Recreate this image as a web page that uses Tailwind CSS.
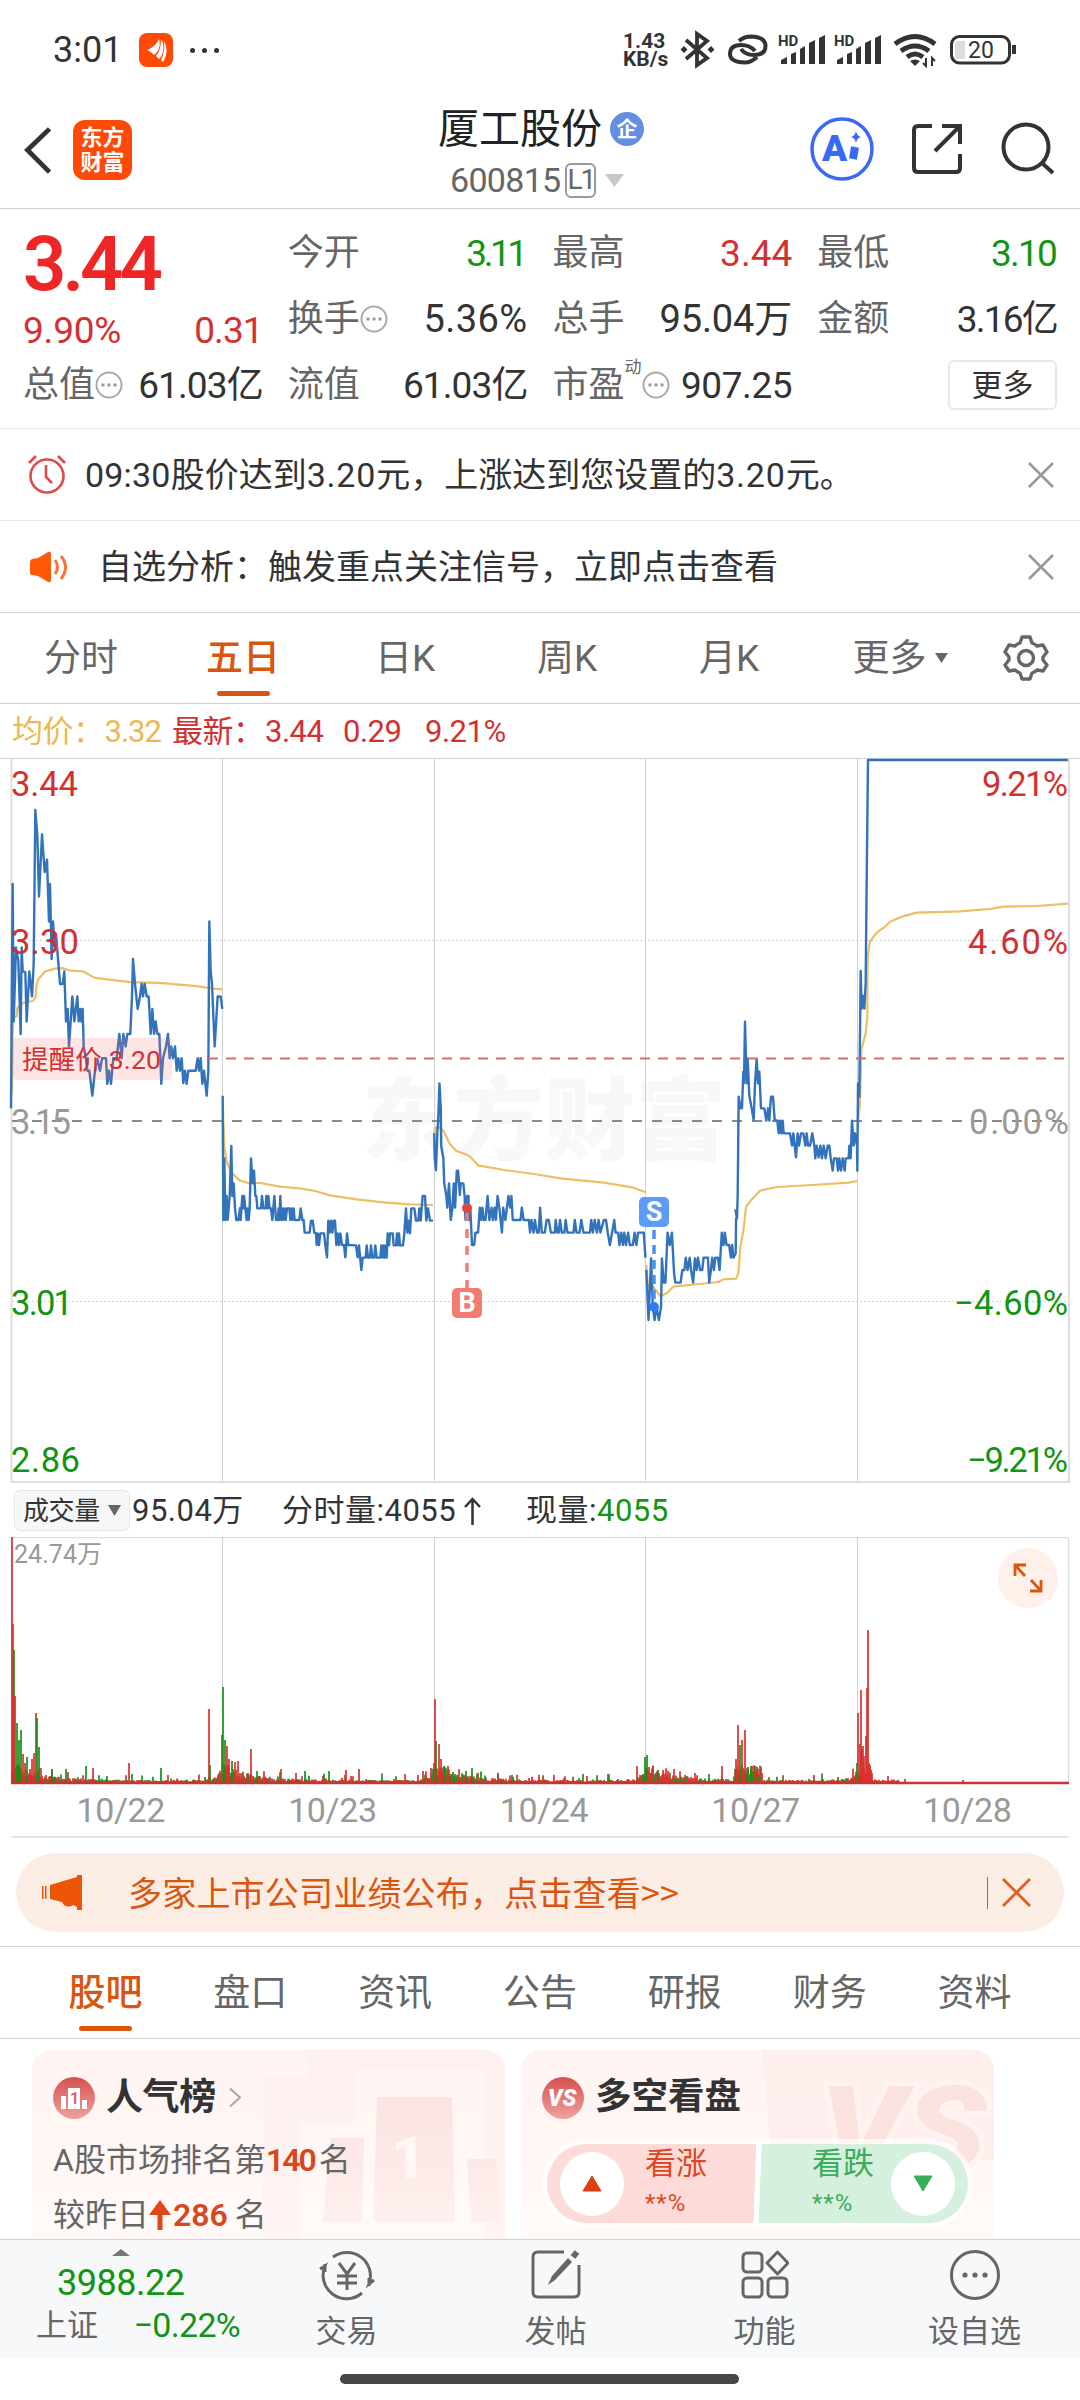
<!DOCTYPE html>
<html lang="zh-CN">
<head>
    <meta charset="UTF-8">
    <meta name="viewport" content="width=device-width, initial-scale=1.0">
    <title>厦工股份 600815</title>
    <script src="https://cdn.jsdelivr.net/npm/@tailwindcss/browser@4"></script>
</head>
<body class="w-[1080px] h-[2400px] overflow-hidden bg-white flex flex-col font-['Roboto','Noto_Sans_CJK_SC',sans-serif] leading-none text-[#333] whitespace-nowrap">

    <!-- status bar -->
    <div class="h-[100px] shrink-0 flex items-center pl-[53px] pr-[58px]">
        <span class="text-[36px] w-[86px]">3:01</span>
        <svg class="w-[34px] h-[34px]" viewBox="0 0 34 34">
            <rect width="34" height="34" rx="8" fill="#ff4a05"/>
            <path d="M8 17C13 15 18 11 20 6C22 12 20 18 15 22C13 20 11 18 8 17ZM17 23C21 18 22 12 22 6C26 12 25 21 20 26ZM22 27C25 21 26 14 25 8C29 15 28 23 24 29Z" fill="#fff"/>
        </svg>
        <div class="flex gap-[7px] ml-[17px]">
            <i class="w-[5px] h-[5px] rounded-full bg-[#333]"></i>
            <i class="w-[5px] h-[5px] rounded-full bg-[#333]"></i>
            <i class="w-[5px] h-[5px] rounded-full bg-[#333]"></i>
        </div>
        <div class="ml-auto flex items-center">
            <div class="w-[53px] text-[21px] leading-[18px] font-bold">1.43<br>KB/s</div>
            <svg class="w-[346px] h-[40px]" viewBox="676 30 346 40" fill="none" stroke="#333" stroke-width="3">
                <path d="M686 40L707 58L697 65V34L707 41L686 59" stroke-width="3.800"/>
                <g fill="#333" stroke="none"><path d="M680.500 49.500l3.500-3.500l3.500 3.500l-3.500 3.500zM707.500 49.500l3.500-3.500l3.500 3.500l-3.500 3.500z"/></g>
                <path d="M739 41Q744 36.500 751 36.500Q765.500 37 765.500 46Q765.500 55 754 55Q745 55 741 49M757 57Q751 62.500 745 62.500Q730 62 730 54Q730 45 741 45Q750 45 755 51" stroke-width="4"/>
                <g fill="#333" stroke="none">
                    <text x="778" y="46" font-size="15" font-weight="700">HD</text>
                    <path d="M781 60l6-3v7h-6zM791 54l5-2v12h-5zM800 49l5-3v18h-5zM809 43l6-3v24h-6zM819 38l6-3v29h-6z"/>
                    <text x="834" y="46" font-size="15" font-weight="700">HD</text>
                    <path d="M837 60l6-3v7h-6zM847 54l5-2v12h-5zM856 49l5-3v18h-5zM865 43l6-3v24h-6zM875 38l6-3v29h-6z"/>
                </g>
                <path d="M895 44Q915 29 935 44M901 51Q915 41 929 51M907 57Q915 51 923 57" stroke-width="5"/>
                <path d="M910 61Q915 58 920 61L915 66Z" fill="#333" stroke="none"/>
                <path d="M926 58V66L923 63M932 66V58L935 61" stroke-width="2"/>
                <rect x="951.500" y="36.500" width="58" height="26.500" rx="8"/>
                <path d="M957 41H965V59H957Q955 59 955 56V44Q955 41 957 41Z" fill="#ddd" stroke="none"/>
                <path d="M1014 45V54" stroke-width="4"/>
                <text x="981" y="58" font-size="23" text-anchor="middle" fill="#333" stroke="none">20</text>
            </svg>
        </div>
    </div>

    <!-- header -->
    <header class="h-[109px] shrink-0 border-b border-[#cfcfcf] relative flex items-start justify-between pt-5 px-6">
        <div class="flex items-center">
            <svg class="w-[28px] h-[48px]" viewBox="0 0 28 50" fill="none" stroke="#333" stroke-width="5"><path d="M26 3L3 25L26 48"/></svg>
            <div class="ml-[21px] w-[59px] h-[60px] rounded-xl bg-[#ff4a05] text-white text-[22px] leading-[25px] font-bold flex items-center justify-center">东方<br>财富</div>
        </div>
        <div class="absolute left-0 right-0 top-[6px] pointer-events-none">
            <div class="flex items-center pl-[438px] h-[46px] text-[41px] text-[#222]">厦工股份
                <span class="ml-[8px] w-[34px] h-[34px] rounded-full bg-[#658de2] text-white text-[21px] font-bold flex items-center justify-center">企</span>
            </div>
            <div class="flex items-center pl-[450px] h-[56px] text-[34px] tracking-[-0.7px] text-[#666]">600815
                <span class="ml-[5px] w-[31px] h-[35px] rounded-md border-2 border-[#999] text-[28px] tracking-[-2px] flex items-center justify-center">L1</span>
                <svg class="ml-[9px] w-[19px] h-[13px]" viewBox="0 0 19 13"><path d="M0 0H19L9.500 13Z" fill="#c8c8c8"/></svg>
            </div>
        </div>
        <svg class="w-[252px] h-[66px] -mr-1 -mt-[4px]" viewBox="808 116 252 66" fill="none" stroke="#333" stroke-width="4">
            <circle cx="842" cy="149" r="30" stroke="#3a6af5" stroke-width="3.500"/>
            <text x="822" y="161" font-size="37" font-weight="900" fill="#3a6af5" stroke="none">A</text>
            <path d="M855 147L853 159" stroke="#3a6af5" stroke-width="8"/>
            <path d="M856 131Q857 136 861 137Q857 138 856 143Q855 138 851 137Q855 136 856 131Z" fill="#3a6af5" stroke="none"/>
            <path d="M932 126H918Q914 126 914 130V168Q914 172 918 172H956Q960 172 960 168V154M935 151L960 126M942 126H960V144"/>
            <circle cx="1026" cy="147" r="22.500"/><path d="M1042 163L1053 173"/>
        </svg>
    </header>

    <!-- quote -->
    <section class="h-[219px] shrink-0 pt-[11px] px-[23px] grid grid-cols-4 gap-x-[25px] grid-rows-[66px_66px_66px] items-center text-[37px] tracking-[-0.9px] text-[#333]">
        <div class="row-span-2 h-[132px] flex flex-col">
            <div class="h-[88px] flex items-center text-[76px] tracking-[-4px] font-semibold text-[#f02525]">3.44</div>
            <div class="h-[44px] flex items-center justify-between text-[#d33131]"><span class="tracking-[-0.2px]">9.90%</span><span>0.31</span></div>
        </div>
        <div class="flex items-center justify-between"><span class="text-[36px] tracking-normal text-[#666]">今开</span><span class="tracking-[-3.5px] pr-[3px] text-[#139413]">3.11</span></div>
        <div class="flex items-center justify-between"><span class="text-[36px] tracking-normal text-[#666]">最高</span><span class="tracking-normal text-[#d33131]">3.44</span></div>
        <div class="flex items-center justify-between"><span class="text-[36px] tracking-normal text-[#666]">最低</span><span class="tracking-[-1.800px] pr-[1px] text-[#139413]">3.10</span></div>
        <div class="flex items-center justify-between">
            <span class="flex items-center text-[36px] tracking-normal text-[#666]">换手<svg class="w-[28px] h-[28px]" viewBox="0 0 28 28"><circle cx="14" cy="14" r="12.500" fill="none" stroke="#aaa" stroke-width="2"/><path d="M6.500 12.500h3v3h-3zM12.500 12.500h3v3h-3zM18.500 12.500h3v3h-3z" fill="#999"/></svg></span>
            <span class="text-[38px] tracking-[0.4px]">5.36%</span>
        </div>
        <div class="flex items-center justify-between"><span class="text-[36px] tracking-normal text-[#666]">总手</span><span class="text-[38px] tracking-[-0.1px]">95.04万</span></div>
        <div class="flex items-center justify-between"><span class="text-[36px] tracking-normal text-[#666]">金额</span><span class="tracking-[-1.800px]">3.16亿</span></div>
        <div class="flex items-center justify-between">
            <span class="flex items-center text-[36px] tracking-normal text-[#666]">总值<svg class="w-[28px] h-[28px]" viewBox="0 0 28 28"><circle cx="14" cy="14" r="12.500" fill="none" stroke="#aaa" stroke-width="2"/><path d="M6.500 12.500h3v3h-3zM12.500 12.500h3v3h-3zM18.500 12.500h3v3h-3z" fill="#999"/></svg></span>
            <span>61.03亿</span>
        </div>
        <div class="flex items-center justify-between"><span class="text-[36px] tracking-normal text-[#666]">流值</span><span>61.03亿</span></div>
        <div class="flex items-center justify-between">
            <span class="flex items-center text-[36px] tracking-normal text-[#666]">市盈<span class="text-[17px] self-start -mt-2">动</span><svg class="w-[28px] h-[28px]" viewBox="0 0 28 28"><circle cx="14" cy="14" r="12.500" fill="none" stroke="#aaa" stroke-width="2"/><path d="M6.500 12.500h3v3h-3zM12.500 12.500h3v3h-3zM18.500 12.500h3v3h-3z" fill="#999"/></svg></span>
            <span class="tracking-[-0.4px]">907.25</span>
        </div>
        <div class="justify-self-end w-[109px] h-[50px] rounded-md border-2 border-[#e8e8e8] text-[31px] tracking-normal flex items-center justify-center">更多</div>
    </section>

    <!-- alerts -->
    <div class="h-[92px] shrink-0 border-t border-[#e8e8e8] flex items-center pl-[27px] pr-[26px]">
        <svg class="w-[40px] h-[42px] -mt-[2px]" viewBox="0 0 40 42" fill="none" stroke="#e04848" stroke-width="2.600"><circle cx="20" cy="23" r="16.500"/><path d="M19 12V24L25 30M2 10L9 3M38 10L31 3"/></svg>
        <span class="ml-[18px] text-[34px]"><span class="tracking-[0.2px]">09:30</span>股价达到<span class="tracking-[0.8px]">3.20</span>元，上涨达到您设置的<span class="tracking-[0.8px]">3.20</span>元。</span>
        <svg class="ml-auto w-[26px] h-[26px]" viewBox="0 0 26 26" stroke="#999" stroke-width="2.600"><path d="M1 1L25 25M25 1L1 25"/></svg>
    </div>
    <div class="h-[92px] shrink-0 border-t border-[#e8e8e8] flex items-center pl-[29px] pr-[26px]">
        <svg class="w-[40px] h-[32px]" viewBox="0 0 40 32"><path d="M1 11Q1 9 3 8L9 7L19 1Q22 0 22 3V29Q22 32 19 31L9 25L3 24Q1 24 1 22Z" fill="#ff5a0a"/><path d="M26 9Q31 16 26 23M32 5Q41 16 32 28" fill="none" stroke="#f5743a" stroke-width="3"/></svg>
        <span class="ml-[29px] text-[34px]">自选分析：触发重点关注信号，立即点击查看</span>
        <svg class="ml-auto w-[26px] h-[26px]" viewBox="0 0 26 26" stroke="#999" stroke-width="2.600"><path d="M1 1L25 25M25 1L1 25"/></svg>
    </div>

    <!-- period tabs -->
    <nav class="h-[91px] shrink-0 border-t border-[#cfcfcf] flex text-[37px] text-[#666]">
        <div class="w-[162px] flex items-center justify-center">分时</div>
        <div class="w-[162px] flex items-center justify-center relative text-[#d9560f] font-medium">五日<i class="absolute bottom-[7px] w-[53px] h-[5px] rounded-full bg-[#d9560f]"></i></div>
        <div class="w-[162px] flex items-center justify-center">日K</div>
        <div class="w-[162px] flex items-center justify-center">周K</div>
        <div class="w-[162px] flex items-center justify-center">月K</div>
        <div class="w-[162px] flex items-center justify-center pl-[18px]">更多<svg class="ml-[8px] w-[13px] h-[10px]" viewBox="0 0 13 10"><path d="M0 0H13L6.500 10Z" fill="#666"/></svg></div>
        <div class="w-[108px] flex items-center justify-center">
            <svg class="w-[46px] h-[46px]" viewBox="0 0 46 46" fill="none" stroke="#666" stroke-width="3.400" stroke-linejoin="round"><path d="M19 2H27L29 8Q32 9 34 11L40 10L44 17L40 22V25L44 30L40 36L34 35Q32 37 29 38L27 44H19L17 38Q14 37 12 35L6 36L2 30L6 25V22L2 17L6 10L12 11Q14 9 17 8Z"/><circle cx="23" cy="23" r="7.500"/></svg>
        </div>
    </nav>

    <!-- legend -->
    <div class="h-[55px] shrink-0 border-t border-[#cfcfcf] flex items-center pl-3 text-[31px] tracking-[-0.5px] text-[#d33131]">
        <span class="text-[#edb84e] w-[160px]">均价：<span class="ml-[1px] tracking-[-1px]">3.32</span></span>
        <span class="w-[93px]">最新：</span>
        <span class="w-[78px]">3.44</span>
        <span class="w-[82px]">0.29</span>
        <span>9.21%</span>
    </div>

    <!-- five day price chart -->
    <svg class="w-[1080px] h-[726px] shrink-0" viewBox="0 758 1080 726" fill="none">
        <text x="362" y="1153" font-size="91" font-weight="900" fill="#f8f8f8">东方财富</text>
        <path d="M0 758.500H1080M222.500 758V1482M434.500 758V1482M645.500 758V1482M857.500 758V1482" stroke="#d0d0d0"/>
        <path d="M11.500 758V1482H1069V758" stroke="#dedede" stroke-width="2"/>
        <path d="M12 940.500H1068M12 1301.500H1068" stroke="#d5d5d5" stroke-dasharray="2 2"/>
        <path d="M12 1121H1068" stroke="#8a8a8a" stroke-width="2" stroke-dasharray="10 10"/>
        <g stroke="#ecbf62" stroke-width="2.200" stroke-linejoin="round">
            <g transform="translate(0 750) scale(.33333 .35714)"><path vector-effect="non-scaling-stroke" d="M36 960L38 800L41 750L50 745L52 722L70 708L100 702L107 690L109 660L115 642L135 620L165 612L190 611L210 618L250 620L285 638L390 650L475 652L530 656L590 661L640 668L667 670"/></g>
            <g transform="translate(200 1120) scale(.33333)"><path vector-effect="non-scaling-stroke" d="M69 -40L70 0L73 80L80 125L92 155L105 168L120 182L145 189L180 189L240 200L305 206L345 213L390 226L470 238L550 247L630 253L699 255"/></g>
            <g transform="translate(400 1040) scale(.43367 .33333)">
                <path vector-effect="non-scaling-stroke" d="M80 262V282L83 262L90 262L100 272L115 312L130 333L145 340L160 348L180 376L240 390L310 402L370 415L470 428L535 442L567 457"/>
                <path vector-effect="non-scaling-stroke" d="M568 675L572 740L585 742L600 768L615 760L630 740L690 732L735 726L745 718L775 716L780 700L785 620L792 570L798 500L810 480L830 452L870 441L950 435L1035 428L1054 423"/>
            </g>
            <g transform="translate(700 750) scale(.33333)"><path vector-effect="non-scaling-stroke" d="M474 1110L480 1060L484 900L497 850L502 800L503 620L510 575L530 548L555 530L570 515L605 500L650 488L780 484L870 477L910 470L1010 468L1104 461"/></g>
        </g>
        <g stroke="#3273bb" stroke-width="2.400" stroke-linejoin="round">
            <g transform="translate(0 750) scale(.33333 .35714)"><path vector-effect="non-scaling-stroke" d="M33 1003L38 375L41 760L48 553L55 590L62 795L65 553L68 620L76 622L80 760L88 620L92 655L96 690L101 600L106 168L112 240L117 410L126 236L134 342L141 307L147 480L150 375L155 585L159 480L164 550L168 515L180 655L188 655L193 620L198 760L203 725L207 830L217 690L223 760L232 690L236 760L241 725L244 760L248 725L251 830L258 865L262 898L268 898L277 968L285 898L292 865L300 898L306 863L318 863L322 935L327 898L333 935L340 863L350 863L358 795L365 863L370 795L377 830L382 795L391 795L396 690L399 585L405 655L413 725L420 690L425 655L429 690L434 655L440 690L446 690L452 795L457 725L462 795L467 760L472 795L478 795L484 935L489 863L498 830L504 795L509 863L514 830L519 863L525 830L530 898L535 863L540 898L545 863L550 933L555 898L560 935L565 898L587 898L593 863L597 898L602 863L607 935L612 898L620 968L625 900L628 480L632 620L636 655L644 830L653 690L662 690L667 725"/></g>
            <g transform="translate(200 1120) scale(.33333)"><path vector-effect="non-scaling-stroke" d="M68 -73L70 300L73 115L76 300L80 228L83 300L86 265L89 228L94 78L97 228L101 190L105 265L109 300L115 300L120 265L122 300L127 228L130 265L132 228L136 265L140 300L143 265L146 300L149 265L153 115L158 190L162 152L166 228L169 228L172 265L183 265L186 228L190 265L197 265L199 228L202 265L205 228L209 265L213 265L217 300L223 228L228 300L233 300L236 265L238 300L241 228L244 300L247 265L250 300L254 265L257 300L261 265L268 265L271 300L274 265L277 300L281 265L284 300L298 300L302 265L307 300L311 300L314 338L329 338L333 302L338 302L343 338L348 340L350 375L353 340L357 375L361 340L372 340L376 375L381 412L385 302L389 338L393 302L397 338L401 302L405 302L409 375L413 340L417 375L421 340L426 375L432 375L436 412L441 340L445 375L468 376L473 412L477 376L484 450L488 413L497 413L500 376L504 413L510 413L513 376L517 413L523 413L526 376L530 413L541 413L544 376L548 413L551 376L554 413L557 376L560 413L563 340L567 376L570 340L578 340L581 376L588 376L591 340L594 376L597 340L600 376L609 376L613 340L618 265L622 338L626 302L630 340L634 265L643 265L648 302L655 302L658 265L662 302L668 228L675 228L679 302L684 265L690 302L699 302"/></g>
            <g transform="translate(400 1040) scale(.43367 .33333)">
                <path vector-effect="non-scaling-stroke" d="M79 280L80 355L83 391L86 280L88 242L91 130L94 205L95 318L100 355L102 430L107 468L109 503L113 430L117 540L121 503L124 430L127 503L131 392L134 392L138 465L140 430L146 430L149 468L151 540L153 503L155 468L158 468L158 540L162 503L166 615L171 615L174 578L180 578L184 503L187 540L190 503L193 540L197 540L202 468L206 540L211 503L214 540L218 503L221 540L225 468L229 503L235 578L238 503L243 540L250 468L254 503L257 468L260 540L278 540L281 503L285 540L297 540L300 578L303 540L308 578L311 540L316 578L320 578L323 503L327 578L334 578L338 540L343 540L348 578L357 578L359 540L363 578L366 578L369 540L373 578L379 578L382 540L386 578L400 578L403 540L407 578L414 578L418 540L423 578L438 578L441 540L445 578L449 540L454 578L458 540L462 578L470 540L475 540L479 578L484 615L489 578L494 540L497 578L503 578L506 615L510 578L514 615L517 578L521 615L526 578L530 615L537 615L541 578L545 615L549 578L562 578L566 653"/>
                <path vector-effect="non-scaling-stroke" d="M568 690L573 840L579 655L583 800L587 840L591 800L597 840L602 800L604 655L608 728L612 728L617 578L622 615L627 578L632 700L635 728L647 728L651 690L656 690L659 653L663 690L668 653L671 690L676 728L680 655L684 690L687 653L692 690L697 690L700 653L710 653L713 728L717 690L720 653L724 690L727 653L733 653L737 690L742 578L746 615L749 578L753 615L759 615L763 653L766 615L769 653L774 640L775 535L778 535"/>
            </g>
            <g transform="translate(700 750) scale(.33333)">
                <path vector-effect="non-scaling-stroke" d="M106 1378L111 1405L113 1340L116 1040L122 1075L126 1075L130 965L132 1000L135 815L140 1000L143 925L148 1038L155 1075L161 1110L165 1000L170 928L174 1000L178 965L183 1075L193 1075L199 1112L204 1075L208 1112L213 1040L219 1040L224 1110L232 1112L236 1150L240 1112L244 1150L248 1112L251 1150L270 1150L276 1187L280 1150L288 1222L293 1150L297 1187L303 1150L310 1150L316 1187L320 1150L324 1187L330 1187L337 1150L343 1187L346 1225L350 1187L356 1222L361 1187L366 1225L371 1187L377 1225L383 1187L388 1187L392 1225L398 1262L402 1225L410 1225L414 1262L418 1225L423 1262L428 1225L434 1262L437 1225L446 1225L448 1187L452 1225L456 1112L461 1187L465 1150L471 1187L472 1262L474 1000L478 1040L482 663L485 776L489 738L493 776L497 700L501 300L504 30H1104"/>
            </g>
        </g>
        <path d="M208 1058.500H1068" stroke="#d86a6a" stroke-width="1.800" stroke-dasharray="10 8"/>
        <!-- buy / sell marks -->
        <path d="M467 1212V1288" stroke="#f47b70" stroke-width="3.500" stroke-dasharray="9 8"/>
        <circle cx="467" cy="1208" r="5" fill="#e04540"/>
        <rect x="452" y="1288" width="30" height="30" rx="5" fill="#f47b70"/>
        <text x="467" y="1312" font-size="27" font-weight="700" fill="#fff" text-anchor="middle">B</text>
        <path d="M654 1230V1302" stroke="#4a90f0" stroke-width="3.500" stroke-dasharray="9 6"/>
        <circle cx="654" cy="1307" r="5" fill="#2b7cf5"/>
        <rect x="639" y="1197" width="30" height="30" rx="5" fill="#5c9cf8"/>
        <text x="654" y="1221" font-size="27" font-weight="700" fill="#fff" text-anchor="middle">S</text>
        <!-- alert price tag -->
        <rect x="13" y="1038" width="159" height="42" rx="4" fill="#f87171" fill-opacity=".18"/>
        <text x="22" y="1069" font-size="26.500" fill="#d33131" textLength="139">提醒价 3.20</text>
        <g font-size="34.500">
            <g fill="#d33131">
                <text x="11" y="796" textLength="67">3.44</text>
                <text x="11" y="954" textLength="68">3.30</text>
                <text x="1068" y="796" text-anchor="end" textLength="86">9.21%</text>
                <text x="1068" y="954" text-anchor="end" textLength="100">4.60%</text>
            </g>
            <g fill="#999">
                <text x="11" y="1134" textLength="60">3.15</text>
                <text x="1069" y="1134" text-anchor="end" textLength="100">0.00%</text>
            </g>
            <g fill="#139413">
                <text x="11" y="1315" textLength="62">3.01</text>
                <text x="11" y="1472" textLength="69">2.86</text>
                <text x="1068" y="1315" text-anchor="end" textLength="114">−4.60%</text>
                <text x="1068" y="1472" text-anchor="end" textLength="101">−9.21%</text>
            </g>
        </g>
    </svg>

    <!-- volume -->
    <div class="h-[53px] shrink-0 flex items-center pl-[14px] text-[31px] tracking-[0.5px]">
        <div class="w-[116px] h-[41px] rounded-md border border-[#e4e6ea] bg-[#f6f7f9] flex items-center pl-[8px] text-[26px] tracking-[-0.4px]">成交量<svg class="ml-[8px] w-[13px] h-[11px]" viewBox="0 0 13 11"><path d="M0 0H13L6.500 11Z" fill="#666"/></svg></div>
        <span class="ml-[2px] w-[150px]">95.04万</span>
        <span class="flex items-center w-[244px]">分时量:4055<svg class="ml-[8px] w-[17px] h-[28px]" viewBox="0 0 17 28" fill="none" stroke="#333" stroke-width="2.500"><path d="M8.500 28V2M1 10L8.500 2L16 10"/></svg></span>
        <span>现量:<span class="text-[#139413]">4055</span></span>
    </div>
    <div class="relative h-[248px] shrink-0">
        <svg id="volume" class="w-[1080px] h-[248px]" viewBox="0 1537 1080 248" fill="none">
            <path d="M11.500 1784V1537.500H1068.500V1784" stroke="#dedede" stroke-width="1.500"/>
            <path d="M222.500 1537V1784M434.500 1537V1784M645.500 1537V1784M857.500 1537V1784" stroke="#d0d0d0"/>
            <text x="14" y="1563" font-size="25" fill="#999" textLength="88">24.74万</text>
        </svg>
        <div class="absolute right-[22px] top-[11px] w-[60px] h-[60px] rounded-full bg-[#fff1e9] flex items-center justify-center">
            <svg class="w-[30px] h-[30px]" viewBox="0 0 30 30" fill="none" stroke="#d9560f" stroke-width="2.800"><path d="M12 13L2 2M2 13V2H13M18 17L28 28M28 17V28H17"/></svg>
        </div>
    </div>
    <div class="mx-[11px] h-[53px] shrink-0 border-b-2 border-[#e2e2e2] grid grid-cols-5 pt-[8px] text-center text-[34px] tracking-[-0.4px] text-[#999]">
        <span class="pl-[8px]">10/22</span><span class="pl-[8px]">10/23</span><span class="pl-[8px]">10/24</span><span class="pl-[8px]">10/27</span><span class="pl-[8px]">10/28</span>
    </div>

    <!-- banner -->
    <div class="mt-[15px] mx-4 h-[79px] shrink-0 rounded-full bg-[#fcede4] flex items-center pl-[26px] pr-[33px] text-[#d9560f]">
        <svg class="w-[40px] h-[35px]" viewBox="0 0 40 35" fill="#eb5505"><path d="M0 11h1.500v13H0zM3 11h1.500v13H3zM8 10L35 2V0H40V35H35V32L31 30Q27 33 22 30L20 27L8 24Z"/></svg>
        <span class="ml-[46px] text-[34px] tracking-[0.2px]">多家上市公司业绩公布，点击查看<span class="font-['Noto_Sans_CJK_SC',sans-serif]">&gt;&gt;</span></span>
        <i class="ml-auto w-px h-[32px] bg-[#d9560f]"></i>
        <svg class="ml-[14px] w-[29px] h-[29px]" viewBox="0 0 29 29" stroke="#e06020" stroke-width="2.800"><path d="M1 1L28 28M28 1L1 28"/></svg>
    </div>

    <!-- section tabs -->
    <nav class="mt-[14px] h-[93px] shrink-0 border-y border-[#cfcfcf] pt-[2px] px-[33px] grid grid-cols-7 text-[37px] text-[#666]">
        <div class="relative flex items-center justify-center text-[#d9560f] font-medium">股吧<i class="absolute bottom-[7px] w-[53px] h-[5px] rounded-full bg-[#d9560f]"></i></div>
        <div class="flex items-center justify-center">盘口</div>
        <div class="flex items-center justify-center">资讯</div>
        <div class="flex items-center justify-center">公告</div>
        <div class="flex items-center justify-center">研报</div>
        <div class="flex items-center justify-center">财务</div>
        <div class="flex items-center justify-center">资料</div>
    </nav>

    <!-- cards -->
    <section class="h-[200px] shrink-0 pt-[11px] px-8 flex gap-4 overflow-hidden">
        <div class="relative w-[473px] h-[220px] rounded-[20px] bg-gradient-to-b from-[#fff4f2] to-[#fffbfa] overflow-hidden px-[21px]">
            <svg class="absolute right-0 top-0 w-[250px] h-[190px]" viewBox="0 0 250 190">
                <defs><linearGradient id="fade" x2="0" y2="1"><stop stop-color="#fbe3e1"/><stop offset="1" stop-color="#fdf0ee"/></linearGradient></defs>
                <path d="M52 0H250V190H230V20H100V72H45V190H8V28H52Z" fill="#fdeeec" fill-opacity=".55"/>
                <path d="M122 47H197L200 172H118ZM75 88H109L107 172H68ZM212 109H241L245 172H216Z" fill="url(#fade)"/>
                <text x="136" y="128" font-size="60" font-weight="900" fill="#fff7f5">1</text>
            </svg>
            <div class="relative flex items-center h-[95px]">
                <svg class="w-[42px] h-[42px]" viewBox="0 0 42 42"><defs><linearGradient id="red" x2="0" y2="1"><stop stop-color="#d5504e"/><stop offset="1" stop-color="#f0a29d"/></linearGradient></defs><circle cx="21" cy="21" r="21" fill="url(#red)"/><path d="M15 11H27V32H15ZM8 19H13V32H8ZM29 23H34V32H29Z" fill="#fff"/><text x="17" y="27" font-size="16" font-weight="700" fill="#d96562">1</text></svg>
                <span class="ml-[11px] text-[37px] tracking-[-0.4px] font-bold">人气榜</span>
                <svg class="ml-[13px] w-[12px] h-[21px]" viewBox="0 0 12 20" fill="none" stroke="#aaa" stroke-width="2.200"><path d="M1 1L11 10L1 19"/></svg>
            </div>
            <div class="relative h-[30px] flex items-center text-[32px] text-[#666]">A股市场排名第<b class="font-semibold text-[#d8471c] tracking-[-2px]">140</b><span class="ml-1">名</span></div>
            <div class="relative mt-[25px] h-[30px] flex items-center text-[32px] text-[#666]">较昨日<svg class="w-[22px] h-[30px]" viewBox="0 0 22 30" fill="#e0481a"><path d="M11 0L22 15H13.500V30H8.500V15H0Z"/></svg><b class="ml-[2px] font-semibold text-[#d8471c]">286</b><span class="ml-[7px]">名</span></div>
        </div>
        <div class="relative w-[473px] h-[220px] rounded-[20px] bg-gradient-to-b from-[#fff4f2] to-[#fffbfa] overflow-hidden px-[21px]">
            <svg class="absolute right-0 top-0 w-[236px] h-[190px]" viewBox="0 0 236 190"><path d="M4 0H236V110H14Z" fill="#fdeae8" fill-opacity=".6"/><text x="62" y="119" font-size="116" font-weight="900" font-style="italic" textLength="166" lengthAdjust="spacingAndGlyphs" fill="#fce2df" stroke="#fff3f1" stroke-width="10" paint-order="stroke">VS</text></svg>
            <div class="relative flex items-center h-[95px]">
                <svg class="w-[42px] h-[42px]" viewBox="0 0 42 42"><circle cx="21" cy="21" r="21" fill="url(#red)"/><text x="20" y="29" font-size="23" font-weight="900" font-style="italic" fill="#fff" text-anchor="middle">VS</text></svg>
                <span class="ml-[11px] text-[36.500px] font-bold">多空看盘</span>
            </div>
            <div class="relative w-[431px] rounded-full bg-white/70 p-[5px] -mt-[6px]">
                <div class="relative h-[79px] rounded-full overflow-hidden flex justify-between items-center px-[13px] bg-[linear-gradient(92deg,#fddbd8_0,#fddbd8_49.3%,#fff_49.4%,#fff_50.6%,#d5f0de_50.7%)]">
                    <div class="flex items-center text-[#dc481f]">
                        <span class="w-[64px] h-[64px] rounded-full bg-white flex items-center justify-center"><svg class="w-[20px] h-[17px]" viewBox="0 0 20 17"><path d="M10 1L19 16H1Z" fill="#dc3d12" stroke="#dc3d12" stroke-linejoin="round"/></svg></span>
                        <div class="ml-[21px] -mt-[3px]"><div class="text-[31px] h-[38px]">看涨</div><div class="text-[24px] h-[30px] pt-[5px] tracking-[1px]">**%</div></div>
                    </div>
                    <div class="flex items-center text-[#3dab5c]">
                        <div class="mr-[17px] -mt-[3px]"><div class="text-[31px] h-[38px]">看跌</div><div class="text-[24px] h-[30px] pt-[5px] tracking-[1px]">**%</div></div>
                        <span class="w-[64px] h-[64px] rounded-full bg-white flex items-center justify-center"><svg class="w-[20px] h-[17px]" viewBox="0 0 20 17"><path d="M10 16L19 1H1Z" fill="#35b05a" stroke="#35b05a" stroke-linejoin="round"/></svg></span>
                    </div>
                </div>
            </div>
        </div>
    </section>

    <!-- bottom bar -->
    <footer class="h-[119px] shrink-0 border-t border-[#cfd1d4] bg-[#f7f8fa] flex text-[31px] text-[#666]">
        <div class="w-[242px] pl-9 pt-[9px] text-[#139413]">
            <svg class="ml-[76px] w-[18px] h-[7px]" viewBox="0 0 18 7"><path d="M9 0L18 7H0Z" fill="#777"/></svg>
            <div class="ml-[21px] mt-[9px] text-[36px] tracking-[-0.5px]">3988.22</div>
            <div class="mt-[7px] flex justify-between items-center pr-[2px]"><span class="text-[#666]">上证</span><span class="text-[34px] tracking-[-0.7px]">−0.22%</span></div>
        </div>
        <div class="w-[209px] flex flex-col items-center pt-[9px]">
            <svg class="w-[58px] h-[52px]" viewBox="0 0 58 52" fill="none" stroke="#666" stroke-width="3"><path d="M15 8A23.500 23.500 0 0 1 51 35L56 31M51 37V29M44 44A23.500 23.500 0 0 1 7 17L2 20M7 15V23M21 14L29 25L37 14M19 27H39M19 34H39M29 25V41"/></svg>
            <span class="mt-[15px]">交易</span>
        </div>
        <div class="w-[209px] flex flex-col items-center pt-[9px]">
            <svg class="w-[52px] h-[52px]" viewBox="0 0 52 52" fill="none" stroke="#666" stroke-width="3"><path d="M34 3H8Q3 3 3 8V43Q3 48 8 48H44Q49 48 49 43V16"/><path d="M18 36L22 27L38 9L42 13L25 31Z" fill="#666" stroke="none"/><path d="M43 8L47 3" stroke-width="6"/></svg>
            <span class="mt-[15px]">发帖</span>
        </div>
        <div class="w-[209px] flex flex-col items-center pt-[9px]">
            <svg class="w-[48px] h-[52px]" viewBox="0 0 48 52" fill="none" stroke="#666" stroke-width="3" stroke-linejoin="round"><rect x="2" y="4" width="19" height="19" rx="4"/><rect x="2" y="29" width="19" height="19" rx="4"/><rect x="27" y="29" width="19" height="19" rx="4"/><path d="M36.500 3L47 14L36.500 25L26 14Z"/></svg>
            <span class="mt-[15px]">功能</span>
        </div>
        <div class="w-[211px] flex flex-col items-center pt-[9px]">
            <svg class="w-[52px] h-[52px]" viewBox="0 0 52 52"><circle cx="26" cy="26" r="23.500" fill="none" stroke="#666" stroke-width="3"/><g fill="#666"><circle cx="16" cy="26" r="2.600"/><circle cx="26" cy="26" r="2.600"/><circle cx="36" cy="26" r="2.600"/></g></svg>
            <span class="mt-[15px]">设自选</span>
        </div>
    </footer>
    <div class="mt-4 ml-[340px] w-[399px] h-[10px] shrink-0 rounded-full bg-[#464646]"></div>

    <script>
        // volume bars: [x, height, colour]
        const R = '#dc2f2f', G = '#169016', M = '#7a5a18';
        const peaks = [
            [12, 246, R], [13, 159, R], [14, 133, G], [15, 87, R], [17, 60, G], [19, 43, G], [21, 53, G], [23, 29, R], [25, 20, R], [27, 26, G],
            [30, 14, R], [32, 24, R], [34, 30, R], [36, 70, R], [37, 65, G], [39, 36, G], [41, 15, R], [52, 14, G], [66, 14, G], [86, 17, G], [93, 15, R],
            [107, 7, G], [129, 20, R], [132, 9, G], [161, 15, G], [209, 74, R], [210, 18, G], [222, 48, R], [223, 96, G], [225, 43, G], [227, 37, R],
            [229, 24, R], [232, 22, G], [235, 21, R], [238, 22, R], [251, 34, R], [257, 12, G], [281, 14, R], [296, 10, R], [305, 12, G], [329, 12, G],
            [346, 13, R], [359, 14, R], [405, 9, R], [423, 12, R], [431, 15, R], [434, 20, G], [435, 84, R], [436, 42, G], [439, 39, R], [441, 24, R],
            [444, 17, G], [448, 17, R], [466, 12, G], [472, 15, G], [498, 9, R], [512, 8, G], [587, 7, R], [608, 9, G], [637, 17, R], [645, 26, G],
            [647, 28, G], [649, 16, R], [653, 17, R], [658, 13, G], [663, 13, R], [709, 9, G], [722, 17, R], [736, 24, R], [738, 58, R], [740, 38, G],
            [742, 43, R], [745, 53, R], [748, 16, G], [751, 17, G], [756, 13, R], [814, 8, R], [857, 20, G], [858, 70, R], [860, 39, M], [861, 93, R],
            [862, 34, M], [863, 37, R], [864, 27, R], [866, 47, R], [867, 95, R], [868, 153, R], [869, 20, R], [870, 18, R], [872, 10, R], [888, 7, R], [905, 4, R], [963, 3, R]
        ];
        let seed = 7;
        const rnd = () => (seed = (seed * 16807) % 2147483647) / 2147483647;
        const days = [[12, 222], [223, 434], [435, 645], [646, 857]];
        const bars = [];
        for (const [a, b] of days) {
            for (let x = a; x < b; x++) {
                const t = x - a, left = b - x;
                const base = 2.5 + 15 * Math.exp(-t / 26) + 9 * Math.exp(-left / 6) + (a === 646 && x > 734 && x < 762 ? 12 : 0);
                bars.push([x, base * (0.45 + rnd() * 0.8) + (rnd() > 0.88 ? rnd() * 7 : 0), rnd() > 0.42 ? R : rnd() > 0.4 ? G : M]);
            }
        }
        for (let x = 857; x < 900; x++) bars.push([x, (x < 872 ? 14 : 3) * (0.4 + rnd() * 0.8), R]);
        const svg = document.getElementById('volume');
        const line = (d, c, w) => {
            const p = document.createElementNS('http://www.w3.org/2000/svg', 'path');
            p.setAttribute('d', d);
            p.setAttribute('stroke', c);
            p.setAttribute('stroke-width', w);
            svg.appendChild(p);
        };
        for (const [x, h, c] of bars.concat(peaks)) line(`M${x} 1783V${1783 - h}`, c, 1.7);
        line('M11 1783H1069', '#c43535', 2.4);
    </script>
</body>
</html>
